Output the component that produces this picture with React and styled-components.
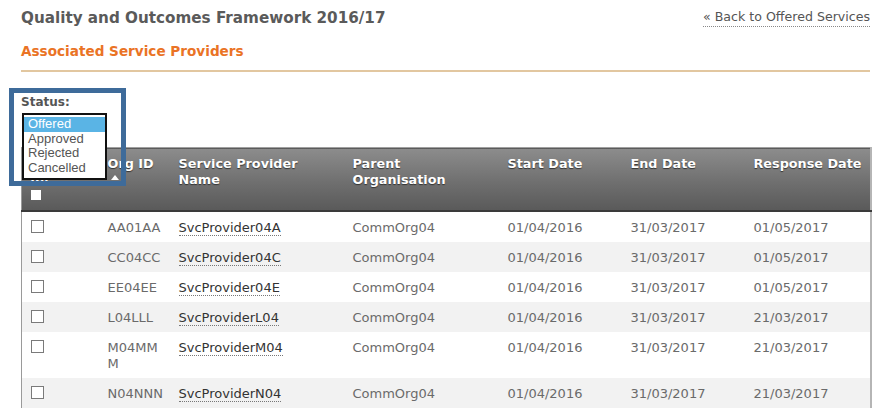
import styled, { createGlobalStyle } from 'styled-components';

const GlobalStyle = createGlobalStyle`
  html, body {
    margin: 0;
    padding: 0;
    background: #ffffff;
  }
  body {
    font-family: "DejaVu Sans", Verdana, sans-serif;
    color: #555555;
  }
`;

const Page = styled.div`
  width: 849px;
  padding: 8px 0 0 21px;
`;

const TopBar = styled.div`
  display: flex;
  justify-content: space-between;
  align-items: flex-start;
`;

const Title = styled.h1`
  margin: 0;
  font-size: 15.2px;
  line-height: 20px;
  font-weight: bold;
  color: #5a5a5a;
`;

const BackLink = styled.a`
  font-size: 12.6px;
  line-height: 18px;
  color: #555555;
  text-decoration: none;
  border-bottom: 1px dotted #888888;
`;

const SubTitle = styled.h2`
  margin: 14px 0 0 0;
  font-size: 13.6px;
  line-height: 18px;
  font-weight: bold;
  color: #ea7325;
`;

const Rule = styled.hr`
  margin: 10px 0 0 0;
  border: 0;
  height: 2px;
  background: #e2c7a0;
`;

const Filter = styled.div`
  position: relative;
  margin-top: 21px;
  height: 54px;
`;

const Label = styled.div`
  font-size: 12px;
  font-weight: bold;
  line-height: 18px;
  color: #555555;
`;

const Highlight = styled.div`
  position: absolute;
  left: -12px;
  top: -5px;
  width: 107px;
  height: 88px;
  border: 5px solid #3e6b9a;
  z-index: 3;
  pointer-events: none;
`;

const ListBox = styled.ul`
  position: absolute;
  left: 1px;
  top: 20px;
  width: 81px;
  margin: 0;
  padding: 2px 0 3px 0;
  list-style: none;
  background: #ffffff;
  border: 2px solid #111111;
  z-index: 2;
  font-family: "Liberation Sans", Arial, sans-serif;
  font-size: 13px;
  line-height: 14.5px;
`;

const Option = styled.li`
  padding: 0 4px;
  color: ${(p) => (p.selected ? '#ffffff' : '#555555')};
  background: ${(p) => (p.selected ? '#5ab4e5' : 'transparent')};
`;

const Table = styled.table`
  width: 849px;
  table-layout: fixed;
  border-collapse: collapse;
  border-left: 1px solid #9a9a9a;
  border-right: 2px solid #b5b5b5;
`;

const HeadRow = styled.tr`
  background: linear-gradient(to bottom, #8c8c8c 0%, #6f6f6f 55%, #5a5a5a 100%);
  border-top: 1px solid #a0a0a0;
  border-bottom: 2px solid #3a3a3a;
`;

const Th = styled.th`
  height: 54px;
  padding: 8px 4px 0 8px;
  vertical-align: top;
  text-align: left;
  font-size: 12.8px;
  line-height: 16px;
  font-weight: bold;
  color: #ffffff;
  text-shadow: 0 1px 1px #333333;
  white-space: ${(p) => (p.nowrap ? 'nowrap' : 'normal')};
`;

const SortArrow = styled.span`
  display: block;
  width: 0;
  height: 0;
  margin: 3px 0 0 3px;
  border-left: 4px solid transparent;
  border-right: 4px solid transparent;
  border-bottom: 5px solid #ffffff;
`;

const HeadBox = styled.span`
  display: block;
  width: 10px;
  height: 10px;
  margin: 2px 0 0 1px;
  background: #ffffff;
`;

const Row = styled.tr`
  background: ${(p) => (p.striped ? '#f2f2f2' : '#ffffff')};
`;

const Td = styled.td`
  padding: 8px ${(p) => (p.tight ? '4px' : '8px')} 6px 8px;
  vertical-align: top;
  font-size: 13px;
  line-height: 16px;
  color: ${(p) => (p.dark ? '#333333' : '#6a6a6a')};
  word-break: ${(p) => (p.tight ? 'break-all' : 'normal')};
`;

const CheckBox = styled.span`
  display: block;
  width: 11px;
  height: 11px;
  margin: 0 0 0 1px;
  border: 1px solid #7a7a7a;
  background: #ffffff;
`;

const ProviderLink = styled.a`
  color: #333333;
  text-decoration: none;
  border-bottom: 1px dotted #777777;
`;

const rows = [
  { id: 'AA01AA', name: 'SvcProvider04A', response: '01/05/2017' },
  { id: 'CC04CC', name: 'SvcProvider04C', response: '01/05/2017' },
  { id: 'EE04EE', name: 'SvcProvider04E', response: '01/05/2017' },
  { id: 'L04LLL', name: 'SvcProviderL04', response: '21/03/2017' },
  { id: 'M04MMM', name: 'SvcProviderM04', response: '21/03/2017' },
  { id: 'N04NNN', name: 'SvcProviderN04', response: '21/03/2017' },
];

const statuses = ['Offered', 'Approved', 'Rejected', 'Cancelled'];

export default function App() {
  return (
    <Page>
      <GlobalStyle />
      <TopBar>
        <Title>Quality and Outcomes Framework 2016/17</Title>
        <BackLink href="#">« Back to Offered Services</BackLink>
      </TopBar>
      <SubTitle>Associated Service Providers</SubTitle>
      <Rule />

      <Filter>
        <Label>Status:</Label>
        <ListBox>
          {statuses.map((s, idx) => (
            <Option key={s} selected={idx === 0}>{s}</Option>
          ))}
        </ListBox>
        <Highlight />
      </Filter>

      <Table>
        <colgroup>
          <col style={{ width: 78 }} />
          <col style={{ width: 71 }} />
          <col style={{ width: 174 }} />
          <col style={{ width: 155 }} />
          <col style={{ width: 123 }} />
          <col style={{ width: 123 }} />
          <col style={{ width: 125 }} />
        </colgroup>
        <thead>
          <HeadRow>
            <Th>
              Select
              <br />
              All
              <HeadBox />
            </Th>
            <Th>
              Org ID
              <SortArrow />
            </Th>
            <Th>Service Provider Name</Th>
            <Th>Parent Organisation</Th>
            <Th>Start Date</Th>
            <Th>End Date</Th>
            <Th nowrap>Response Date</Th>
          </HeadRow>
        </thead>
        <tbody>
          {rows.map((r, idx) => (
            <Row key={r.id} striped={idx % 2 === 1}>
              <Td><CheckBox /></Td>
              <Td tight>{r.id}</Td>
              <Td dark><ProviderLink href="#">{r.name}</ProviderLink></Td>
              <Td>CommOrg04</Td>
              <Td>01/04/2016</Td>
              <Td>31/03/2017</Td>
              <Td>{r.response}</Td>
            </Row>
          ))}
        </tbody>
      </Table>
    </Page>
  );
}
